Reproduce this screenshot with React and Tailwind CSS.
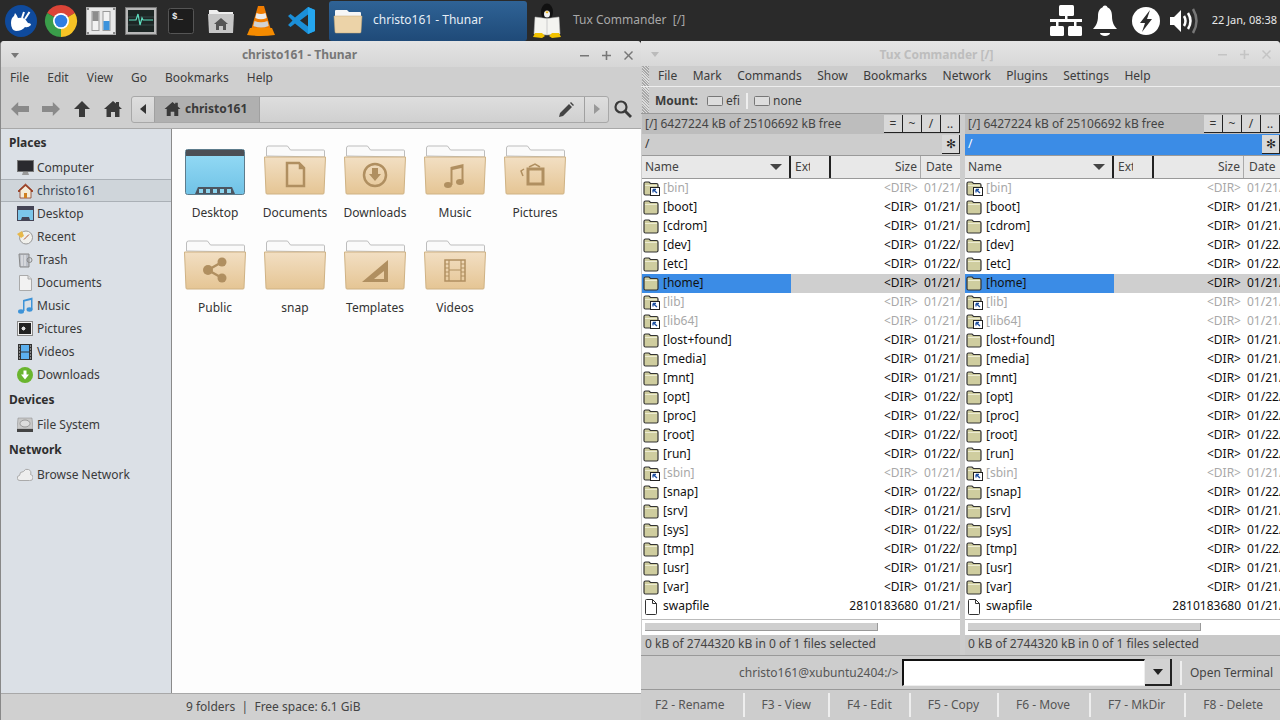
import React from 'react';

const font = { fontFamily: '"Noto Sans", sans-serif' };

const XfceIcon = () => (
  <svg width="40" height="40" viewBox="0 0 40 40">
    <circle cx="20" cy="20" r="16" fill="#0f4a9c" />
    <path d="M10 22q0-5 3-7l1-3q2 2 3 5 4-1 7 1l3 4q3 0 3 2-3 3-6 2-3 4-9 4-5-1-5-8z" fill="#fff" />
    <path d="M21 17l2-6M24 18l4.500-7" stroke="#fff" strokeWidth="2" />
  </svg>
);

const ChromeIcon = () => (
  <svg width="34" height="34" viewBox="0 0 34 34">
    <path d="M17 17L3.140 9A16 16 0 0 1 30.860 9z" fill="#db4437" />
    <path d="M17 17L30.860 9A16 16 0 0 1 17 33z" fill="#f7c325" />
    <path d="M17 17V33A16 16 0 0 1 3.140 9z" fill="#3a9d4a" />
    <circle cx="17" cy="17" r="8" fill="#fff" />
    <circle cx="17" cy="17" r="6.300" fill="#2f7de1" />
  </svg>
);

const SettingsIcon = () => (
  <svg width="30" height="28" viewBox="0 0 30 28">
    <rect x="0.500" y="0.500" width="29" height="27" fill="#e8e8e8" stroke="#b0b0b0" />
    <path d="M1 1h2v2H1zM27 1h2v2h-2zM1 25h2v2H1zM27 25h2v2h-2z" fill="#888" />
    <rect x="6" y="4.500" width="7" height="19" fill="#f2f2f2" stroke="#999" />
    <rect x="6.500" y="5" width="6" height="9" fill="#8c8c8c" />
    <rect x="17" y="4.500" width="7" height="19" fill="#f2f2f2" stroke="#999" />
    <rect x="17.500" y="14" width="6" height="9" fill="#3d93dc" />
  </svg>
);

const MonitorIcon = () => (
  <svg width="32" height="28" viewBox="0 0 32 28">
    <rect x="0.500" y="0.500" width="31" height="27" fill="#b8b8b8" stroke="#777" />
    <rect x="3" y="3" width="26" height="22" fill="#1c2624" />
    <path d="M3 10h26M3 18h26" stroke="#344" strokeWidth="1" />
    <path d="M4 13h7l2-6 2 11 2-7 1 2h10" stroke="#5fe0c0" strokeWidth="1.200" fill="none" />
  </svg>
);

const TerminalIcon = () => (
  <svg width="26" height="26" viewBox="0 0 26 26">
    <rect x="0.500" y="0.500" width="25" height="25" rx="2" fill="#1d1d1d" stroke="#555" />
    <text x="4" y="11" fontSize="9" fill="#eee" fontFamily="Liberation Mono, monospace" fontWeight="700">$_</text>
  </svg>
);

const HomeFolderIcon = () => (
  <svg width="28" height="26" viewBox="0 0 28 26">
    <path d="M2 6V2h8l2 2h14v4H2z" fill="#eee" />
    <path d="M1 6h26l-1 19H2L1 6z" fill="#c6c6c6" />
    <path d="M14 10l7 6h-2v6h-3v-4h-4v4H9v-6H7z" fill="#555" />
  </svg>
);

const VlcIcon = () => (
  <svg width="28" height="30" viewBox="0 0 28 30">
    <path d="M11 0h6l7 24H4z" fill="#f07c00" />
    <path d="M9.500 7q4.500 2 9 0l1.200 5q-5.700 2.500-11.400 0z" fill="#ececec" />
    <path d="M7.500 15q6.500 2.500 13 0l1.200 5q-7.700 3-15.400 0z" fill="#d2d2d2" />
    <path d="M3 22h22l3 7q-14 2-28 0z" fill="#f58b00" />
  </svg>
);

const VsCodeIcon = () => (
  <svg width="27" height="27" viewBox="0 0 27 27">
    <path fillRule="evenodd" d="M20 0l7 3v21l-7 3L7 16.500 2.500 20 0 18l4.500-4.500L0 9l2.500-2L7 10.500zM20 7.500l-8 6 8 6z" fill="#1b8fd8" />
    <path d="M20 0l7 3v21l-7 3z" fill="#25a6ee" />
  </svg>
);

const TuxBookIcon = () => (
  <svg width="30" height="36" viewBox="0 0 30 36">
    <ellipse cx="15" cy="9" rx="6" ry="8.500" fill="#111" />
    <ellipse cx="15" cy="11" rx="3" ry="3.500" fill="#f2f2f2" />
    <path d="M13 8.500h4l-2 2z" fill="#f0b000" />
    <path d="M3 14l12 1.500L27 14l1 17-13 1-13-1z" fill="#f4f4f0" stroke="#bbb" strokeWidth="0.500" />
    <path d="M15 16v16" stroke="#ccc" />
    <path d="M1 34l2-4h7l3 3-3 2zM29 34l-2-4h-7l-3 3 3 2z" fill="#f2c200" />
  </svg>
);

const NetworkIcon = () => (
  <svg width="32" height="31" viewBox="0 0 32 31" fill="#fff">
    <rect x="9" y="0" width="15" height="11" rx="1.500" />
    <rect x="15" y="11" width="2.500" height="4" />
    <rect x="0" y="14" width="32" height="3" />
    <rect x="6" y="17" width="2.500" height="4" />
    <rect x="24" y="17" width="2.500" height="4" />
    <rect x="0" y="21" width="14" height="10" rx="1.500" />
    <rect x="18" y="21" width="14" height="10" rx="1.500" />
  </svg>
);

const BellIcon = () => (
  <svg width="26" height="32" viewBox="0 0 26 32" fill="#fff">
    <circle cx="13" cy="3" r="2.500" />
    <path d="M13 2c5 0 7 4 7 9 0 6 2 10 5 13H1c3-3 5-7 5-13 0-5 2-9 7-9z" />
    <path d="M8 28h10a5 3 0 0 1-10 0z" />
  </svg>
);

const BoltIcon = () => (
  <svg width="28" height="28" viewBox="0 0 28 28">
    <circle cx="14" cy="14" r="14" fill="#fff" />
    <path d="M18 3L8 16h5l-3 9 10-13h-5z" fill="#2b2b2b" />
  </svg>
);

const SpeakerIcon = () => (
  <svg width="30" height="28" viewBox="0 0 30 28" fill="none">
    <path d="M0 10h4l7-7v22l-7-7H0z" fill="#fff" />
    <path d="M14 9q3 5 0 10M18 6q5 8 0 16" stroke="#fff" strokeWidth="2.500" />
    <path d="M23 2q7 12 0 24" stroke="#777" strokeWidth="2.500" />
  </svg>
);

const FolderArt = ({ children }) => (
  <svg width="62" height="50" viewBox="0 0 62 50">
    <defs>
      <linearGradient id="tan" x1="0" y1="0" x2="0" y2="1">
        <stop offset="0" stopColor="#f2dfc3" />
        <stop offset="1" stopColor="#e5c594" />
      </linearGradient>
    </defs>
    <path d="M2.500 11V3q0-2 2-2h19l3 4h33q1 0 1 1v6z" fill="#fafafa" stroke="#bdbdbd" />
    <path d="M0.500 12h61l-1.500 36q0 1-1 1H3q-1 0-1-1z" fill="url(#tan)" stroke="#cfb284" />
    {children}
  </svg>
);

const glyph = '#b08f60';

const folderGlyphs = {
  Documents: <path d="M23 18h12l5 5v18H23z M36 19v4h3" fill="none" stroke={glyph} strokeWidth="2.500" />,
  Downloads: (
    <g>
      <circle cx="31" cy="30" r="11" fill="none" stroke={glyph} strokeWidth="2.500" />
      <path d="M28 23h6v6h3l-6 7-6-7h3z" fill={glyph} />
    </g>
  ),
  Music: (
    <g fill={glyph}>
      <ellipse cx="24" cy="40" rx="4" ry="3" />
      <ellipse cx="36" cy="37" rx="4" ry="3" />
      <path d="M26.500 40V22l13-3v18h-2V23l-9 2v15z" />
    </g>
  ),
  Pictures: (
    <g fill="none" stroke={glyph}>
      <rect x="24" y="24" width="15" height="15" strokeWidth="3" />
      <path d="M25 22l6-3 5 3M20 24l-3 2 2 5" strokeWidth="1.500" />
    </g>
  ),
  Public: (
    <g fill={glyph}>
      <circle cx="24" cy="30" r="5" />
      <circle cx="38" cy="22" r="4.500" />
      <circle cx="38" cy="38" r="4.500" />
      <path d="M24 30l14-8M24 30l14 8" stroke={glyph} strokeWidth="2.500" />
    </g>
  ),
  Templates: <path fillRule="evenodd" d="M18 42L44 20v22zM30 39h10V31z" fill={glyph} />,
  Videos: (
    <g fill="none" stroke={glyph}>
      <rect x="21" y="20" width="20" height="21" strokeWidth="1.500" />
      <path d="M25 20v21M37 20v21M25 30h12M21 24h4M21 28h4M21 32h4M21 36h4M37 24h4M37 28h4M37 32h4M37 36h4" strokeWidth="1.200" />
    </g>
  ),
};

const DesktopArt = () => (
  <svg width="60" height="46" viewBox="0 0 60 46">
    <defs>
      <linearGradient id="sky" x1="0" y1="0" x2="0" y2="1">
        <stop offset="0" stopColor="#96dcf6" />
        <stop offset="1" stopColor="#70c2e6" />
      </linearGradient>
    </defs>
    <rect x="0.500" y="0.500" width="59" height="45" rx="2" fill="url(#sky)" stroke="#5e7c8c" />
    <rect x="1" y="1" width="58" height="6" fill="#4c4f55" />
    <path d="M10 45l3-7h34l3 7z" fill="#4c5560" />
    {[16, 23, 30, 37, 44].map((x) => (
      <rect key={x} x={x - 2} y="40" width="4" height="4" fill="#8cd4ee" />
    ))}
  </svg>
);

const folders = [
  'Desktop', 'Documents', 'Downloads', 'Music', 'Pictures',
  'Public', 'snap', 'Templates', 'Videos',
];

const SideIcon = ({ name }) => {
  switch (name) {
    case 'Computer':
      return (
        <svg width="17" height="16" viewBox="0 0 17 16">
          <rect x="0.500" y="0.500" width="16" height="11" fill="#2a2a2e" stroke="#777" />
          <path d="M6 12h5l1 3H5z" fill="#999" />
        </svg>
      );
    case 'christo161':
      return (
        <svg width="17" height="16" viewBox="0 0 17 16">
          <path d="M1 8l7.500-7L16 8l-1 1-1-1v7H3V8L2 9z" fill="#f4ecd8" stroke="#8c3b22" strokeWidth="0.800" />
          <path d="M8.500 1L1 8l1 1 6.500-6L15 9l1-1z" fill="#9b3d22" />
          <rect x="7" y="10" width="3" height="5" fill="#d08020" />
        </svg>
      );
    case 'Desktop':
      return (
        <svg width="17" height="15" viewBox="0 0 17 15">
          <rect x="0.500" y="0.500" width="16" height="14" fill="#7cc6ea" stroke="#445" />
          <rect x="1" y="1" width="15" height="3" fill="#445" />
          <path d="M4 14l1-3h7l1 3z" fill="#445" />
        </svg>
      );
    case 'Recent':
      return (
        <svg width="17" height="16" viewBox="0 0 17 16">
          <circle cx="9" cy="8.500" r="6.500" fill="#f0f0ec" stroke="#999" />
          <path d="M0 5l5-3 2 5-3 2z" fill="#e8b84a" />
          <path d="M9 8.500l3-3M9 8.500l-2 2" stroke="#b05030" />
        </svg>
      );
    case 'Trash':
      return (
        <svg width="15" height="16" viewBox="0 0 15 16">
          <path d="M1 2h10v13H2z" fill="#bcc0c8" stroke="#888" />
          <path d="M4 3v11M7 3v11" stroke="#eee" />
          <circle cx="11.500" cy="8" r="2.500" fill="none" stroke="#888" />
        </svg>
      );
    case 'Documents':
      return (
        <svg width="13" height="16" viewBox="0 0 13 16">
          <path d="M0.500 0.500H9l3.500 3.500v11.500H0.500z" fill="#f2f2f2" stroke="#aaa" />
          <path d="M9 0.500V4h3.500" fill="#ddd" stroke="#aaa" />
        </svg>
      );
    case 'Music':
      return (
        <svg width="15" height="17" viewBox="0 0 15 17" fill="#3d93d8">
          <ellipse cx="3" cy="14.500" rx="3" ry="2.200" />
          <ellipse cx="11.500" cy="12.500" rx="3" ry="2.200" />
          <path d="M5 14V3l9.500-2.500v12h-1.500V3L6.500 4.500V14z" />
        </svg>
      );
    case 'Pictures':
      return (
        <svg width="16" height="15" viewBox="0 0 16 15">
          <rect x="0.500" y="0.500" width="15" height="14" fill="#f0f0f0" stroke="#888" />
          <rect x="2" y="2" width="12" height="11" fill="#222" />
          <path d="M5 9l3-3M5 6l3 3M4.500 7.500h4M6.500 5.500v4" stroke="#ddd" />
        </svg>
      );
    case 'Videos':
      return (
        <svg width="14" height="16" viewBox="0 0 14 16">
          <rect width="14" height="16" fill="#333" />
          <rect x="3" y="1" width="8" height="6.500" fill="#5cb0ee" />
          <rect x="3" y="8.500" width="8" height="6.500" fill="#5cb0ee" />
          <path d="M1 2h1M1 5h1M1 8h1M1 11h1M1 14h1M12 2h1M12 5h1M12 8h1M12 11h1M12 14h1" stroke="#ddd" />
        </svg>
      );
    case 'Downloads':
      return (
        <svg width="16" height="16" viewBox="0 0 16 16">
          <circle cx="8" cy="8" r="8" fill="#6ab52e" />
          <path d="M6.500 3.500h3v4H12l-4 5-4-5h2.500z" fill="#fff" />
        </svg>
      );
    case 'File System':
      return (
        <svg width="16" height="16" viewBox="0 0 16 16">
          <path d="M1 1h14l1 11H0z" fill="#c8c8c8" stroke="#888" strokeWidth="0.500" />
          <rect y="12" width="16" height="3" fill="#444" />
          <ellipse cx="8" cy="6.500" rx="5" ry="3.500" fill="#ddd" stroke="#999" />
        </svg>
      );
    default:
      return (
        <svg width="16" height="13" viewBox="0 0 16 13">
          <path d="M3 12.500a2.500 2.500 0 0 1-.5-5 4 4 0 0 1 4-4 4 4 0 0 1 5 -2 3.500 3.500 0 0 1 2 5 3 3 0 0 1-1 6z" fill="#eee" stroke="#aaa" />
        </svg>
      );
  }
};

const SideRow = ({ name, active }) => (
  <div className={`flex h-[23px] items-center ${active ? 'border-y border-[#aab0b6] bg-[#cfd5da] text-[#3b4a5a]' : 'text-[#3a3a3a]'}`}>
    <div className="flex w-[36px] shrink-0 justify-center pl-[12px]">
      <SideIcon name={name} />
    </div>
    <span>{name}</span>
  </div>
);

const SideHead = ({ children }) => (
  <div className="flex h-[25px] items-center pb-[2px] pl-[8px] font-bold text-[#2e2e2e]">{children}</div>
);

const Thunar = () => (
  <div className="flex h-full w-[641px] shrink-0 flex-col overflow-hidden rounded-t-[4px] border-l border-[#888] bg-[#cfcfcf] text-[12px] text-[#3c3c3c]">
    <div className="flex h-[26px] shrink-0 items-center justify-between bg-gradient-to-b from-[#e4e4e4] to-[#d6d6d6] pl-[10px] pr-[8px] pt-[2px]">
      <div className="h-0 w-0 border-x-[4px] border-t-[5px] border-x-transparent border-t-[#777]" />
      <span className="font-bold text-[#777]">christo161 - Thunar</span>
      <div className="flex gap-[13px] text-[#777]">
        <svg width="9" height="9" viewBox="0 0 9 9"><path d="M0 4h9v1.500H0z" fill="#777" /></svg>
        <svg width="9" height="9" viewBox="0 0 9 9"><path d="M3.700 0h1.600v3.700H9v1.600H5.300V9H3.700V5.300H0V3.700h3.700z" fill="#777" /></svg>
        <svg width="9" height="9" viewBox="0 0 9 9"><path d="M1 0l3.500 3.500L8 0l1 1-3.500 3.500L9 8l-1 1-3.500-3.500L1 9 0 8l3.500-3.500L0 1z" fill="#777" /></svg>
      </div>
    </div>
    <div className="flex h-[23px] shrink-0 items-center gap-[18px] pb-[2px] pl-[9px]">
      {['File', 'Edit', 'View', 'Go', 'Bookmarks', 'Help'].map((m) => (
        <span key={m}>{m}</span>
      ))}
    </div>
    <div className="flex h-[38px] shrink-0 items-center pl-[10px]">
      <div className="flex w-[120px] items-center">
        <svg className="mr-[13px]" width="18" height="16" viewBox="0 0 20 16" preserveAspectRatio="none"><path d="M0 8l8-7v4h12v6H8v4z" fill="#8a8a8a" /></svg>
        <svg className="mr-[13px]" width="18" height="16" viewBox="0 0 20 16" preserveAspectRatio="none"><path d="M20 8l-8-7v4H0v6h12v4z" fill="#8a8a8a" /></svg>
        <svg className="mr-[13px]" width="18" height="18" viewBox="0 0 18 18"><path d="M9 1l8 8h-5v8H6V9H1z" fill="#3a3a3a" /></svg>
        <svg width="18" height="18" viewBox="0 0 18 18"><path d="M9 1l3 2.600V2h3v4.200L18 9h-2.500v8H11v-5H7v5H2.500V9H0z" fill="#3a3a3a" /></svg>
      </div>
      <div className="flex h-[27px] w-[478px] overflow-hidden rounded-[3px] border border-[#a8a8a8] bg-gradient-to-b from-[#dedede] to-[#d0d0d0]">
        <div className="flex w-[23px] items-center justify-center border-r border-[#a0a0a0]">
          <div className="h-0 w-0 border-y-[5px] border-r-[6px] border-y-transparent border-r-[#333]" />
        </div>
        <div className="flex w-[105px] items-center gap-[4px] border-r border-[#a0a0a0] bg-[#b0b0b0] pl-[9px] font-bold text-[#3a3a3a]">
          <svg width="17" height="16" viewBox="0 0 18 18"><path d="M9 1l3 2.600V2h3v4.200L18 9h-2.500v8H11v-5H7v5H2.500V9H0z" fill="#3a3a3a" /></svg>
          christo161
        </div>
        <div className="flex flex-1 items-center justify-end pr-[10px]">
          <svg width="15" height="15" viewBox="0 0 15 15"><path d="M0 15l1-4L10 2l3 3-9 9zM11 1l1-1 3 3-1 1z" fill="#444" /></svg>
        </div>
        <div className="flex w-[24px] items-center justify-center border-l border-[#a0a0a0]">
          <div className="h-0 w-0 border-y-[5px] border-l-[6px] border-y-transparent border-l-[#999]" />
        </div>
      </div>
      <svg className="ml-[5px]" width="18" height="18" viewBox="0 0 18 18" fill="none"><circle cx="7" cy="7" r="5.500" stroke="#3a3a3a" strokeWidth="2.200" /><path d="M11 11l6 6" stroke="#3a3a3a" strokeWidth="2.800" /></svg>
    </div>
    <div className="flex min-h-0 flex-1 border-y border-[#a8a8a8]">
      <div className="w-[171px] shrink-0 border-r border-[#8a8a8a] bg-[#dbe0e6] pt-[2px]">
        <SideHead>Places</SideHead>
        {['Computer', 'christo161', 'Desktop', 'Recent', 'Trash', 'Documents', 'Music', 'Pictures', 'Videos', 'Downloads'].map((n) => (
          <SideRow key={n} name={n} active={n === 'christo161'} />
        ))}
        <div className="h-[2px]" />
        <SideHead>Devices</SideHead>
        <SideRow name="File System" />
        <div className="h-[2px]" />
        <SideHead>Network</SideHead>
        <SideRow name="Browse Network" />
      </div>
      <div className="flex-1 bg-[#fdfdfd] pl-[3px] pt-[16px]">
        <div className="grid grid-cols-[repeat(5,80px)] auto-rows-[95px]">
          {folders.map((f) => (
            <div key={f} className="flex flex-col items-center">
              <div className="flex h-[50px] items-end">
                {f === 'Desktop' ? <DesktopArt /> : <FolderArt>{folderGlyphs[f]}</FolderArt>}
              </div>
              <span className="mt-[9px] text-[#333]">{f}</span>
            </div>
          ))}
        </div>
      </div>
    </div>
    <div className="flex h-[26px] shrink-0 items-center bg-[#d0d0d0] pl-[185px] text-[#444]">
      9 folders&nbsp;&nbsp;|&nbsp;&nbsp;Free space: 6.1 GiB
    </div>
  </div>
);

const rows = [
  ['[bin]', '01/21/', 'link'], ['[boot]', '01/21/'], ['[cdrom]', '01/21/'], ['[dev]', '01/22/'],
  ['[etc]', '01/22/'], ['[home]', '01/21/', 'sel'], ['[lib]', '01/21/', 'link'], ['[lib64]', '01/21/', 'link'],
  ['[lost+found]', '01/21/'], ['[media]', '01/21/'], ['[mnt]', '01/21/'], ['[opt]', '01/22/'],
  ['[proc]', '01/22/'], ['[root]', '01/22/'], ['[run]', '01/22/'], ['[sbin]', '01/21/', 'link'],
  ['[snap]', '01/22/'], ['[srv]', '01/21/'], ['[sys]', '01/22/'], ['[tmp]', '01/22/'],
  ['[usr]', '01/21/'], ['[var]', '01/21/'],
];

const MiniFolder = ({ link }) => (
  <svg width="17" height="15" viewBox="0 0 17 15">
    <path d="M1 12.500V2.500q0-1.500 1.500-1.500h3.500l1.500 1.500H13.500q1.500 0 1.500 1.500v8.500q0 1.500-1.500 1.500h-11q-1.500 0-1.500-1.500z" fill="#cfcd9f" stroke="#333" strokeWidth="1.200" />
    <path d="M2 4.500h12" stroke="#ecebd2" />
    {link && (
      <g>
        <rect x="7.500" y="6.500" width="9" height="8" fill="#fff" stroke="#222" />
        <path d="M14 12L10 8.500M10 8.500h3M10 8.500v3" stroke="#1c4fa0" strokeWidth="1.300" fill="none" />
      </g>
    )}
  </svg>
);

const MiniFile = () => (
  <svg width="17" height="16" viewBox="0 0 17 16">
    <path d="M3.500 0.500h6l4 4v10q0 1-1 1h-9q-1 0-1-1v-13q0-1 1-1z" fill="#fff" stroke="#333" />
    <path d="M9.500 0.500v4h4" fill="none" stroke="#333" />
  </svg>
);

const PanelButton = ({ children }) => (
  <div className="flex h-[18px] w-[19px] items-center justify-center border-r border-b border-[#222] bg-[#d8d8d8] text-[#333]">{children}</div>
);

const FileRow = ({ name, date, kind, size, file, dateClass }) => {
  const link = kind === 'link';
  const sel = kind === 'sel';
  return (
    <div className={`flex h-[19px] items-center ${link ? 'text-[#a8a8a8]' : 'text-[#111]'} ${sel ? 'bg-[#cfcfcf]' : ''}`}>
      <div className={`flex h-full w-[149px] shrink-0 items-center pl-[1px] ${sel ? 'bg-[#3b8ce6]' : ''}`}>
        <span className="flex w-[20px] shrink-0 items-center">
          {file ? <MiniFile /> : <MiniFolder link={link} />}
        </span>
        <span className="mb-[2px]">{name}</span>
      </div>
      <div className="mb-[2px] w-[127px] shrink-0 text-right">{size}</div>
      <div className={`mb-[2px] shrink-0 overflow-hidden whitespace-nowrap pl-[6px] ${dateClass}`}>{date}</div>
    </div>
  );
};

const Panel = ({ active, width, dateClass }) => (
  <div className={`flex h-full shrink-0 flex-col overflow-hidden ${width}`}>
    <div className="flex h-[20px] shrink-0 items-center justify-between bg-[#bdbdbd]">
      <span className="pl-[3px] text-[#444]">[/] 6427224 kB of 25106692 kB free</span>
      <div className="flex">
        <PanelButton>=</PanelButton>
        <PanelButton>~</PanelButton>
        <PanelButton>/</PanelButton>
        <PanelButton>..</PanelButton>
      </div>
    </div>
    <div className={`flex h-[21px] shrink-0 items-center justify-between pl-[3px] ${active ? 'bg-[#3b8ce6] text-white' : 'bg-[#cdcdcd] text-[#333]'}`}>
      <span className="mb-[2px]">/</span>
      <div className="flex h-[19px] w-[18px] items-center justify-center border-r border-b border-[#222] bg-[#d8d8d8] text-[#222]">✻</div>
    </div>
    <div className="flex h-[24px] shrink-0 items-center border-y border-[#999] bg-[#e8e8e8] text-[#444]">
      <div className="flex h-full w-[149px] shrink-0 items-center justify-between border-r-2 border-[#222] pl-[3px] pr-[7px]">
        <span>Name</span>
        <div className="h-0 w-0 border-x-[6px] border-t-[6px] border-x-transparent border-t-[#444]" />
      </div>
      <div className="flex h-full w-[40px] shrink-0 items-center border-r-2 border-[#222] pl-[4px]">
        <span className="w-[15px] overflow-hidden">Ext</span>
      </div>
      <div className="flex h-full w-[90px] shrink-0 items-center justify-end border-r border-[#aaa] pr-[3px]">Size</div>
      <div className="pl-[5px]">Date</div>
    </div>
    <div className="flex min-h-0 flex-1 flex-col overflow-hidden bg-white">
      <div className="flex-1">
        {rows.map(([name, date, kind]) => (
          <FileRow key={name} name={name} date={date} kind={kind} size="<DIR>" dateClass={dateClass} />
        ))}
        <FileRow name="swapfile" date="01/21/" size="2810183680" file dateClass={dateClass} />
      </div>
      <div className="h-[16px] shrink-0 border-t border-[#bbb] pl-[3px] pt-[3px]">
        <div className="h-[8px] w-[233px] border-r border-b border-[#999] bg-[#cfcfcf]" />
      </div>
    </div>
    <div className="flex h-[20px] shrink-0 items-center bg-[#c9c9c9] pb-[3px] pl-[3px] text-[#444]">0 kB of 2744320 kB in 0 of 1 files selected</div>
  </div>
);

const fkeys = [
  ['F2 - Rename', 'pr-[18px]'],
  ['F3 - View', 'pl-[17px] pr-[17px]'],
  ['F4 - Edit', 'pl-[17px] pr-[17px]'],
  ['F5 - Copy', 'pl-[17px] pr-[18px]'],
  ['F6 - Move', 'pl-[17px] pr-[19px]'],
  ['F7 - MkDir', 'pl-[17px] pr-[19px]'],
  ['F8 - Delete', 'pl-[17px]'],
];

const Grip = () => (
  <div className="h-full w-[7px] shrink-0 bg-[repeating-linear-gradient(45deg,#a8a8a8,#a8a8a8_1px,#dcdcdc_1px,#dcdcdc_2px)]" />
);

const TuxCommander = () => (
  <div className="flex h-full min-w-0 flex-1 flex-col overflow-hidden rounded-tr-[4px] bg-[#cdcdcd] text-[12px] text-[#3c3c3c]">
    <div className="flex h-[25px] shrink-0 items-center justify-between bg-gradient-to-b from-[#e4e4e4] to-[#d8d8d8] pl-[10px] pr-[9px] pt-[2px]">
      <div className="h-0 w-0 border-x-[4px] border-t-[5px] border-x-transparent border-t-[#bbb]" />
      <span className="pr-[4px] font-bold text-[#bdbdbd]">Tux Commander [/]</span>
      <div className="flex gap-[13px]">
        <svg width="9" height="9" viewBox="0 0 9 9"><path d="M0 4h9v1.500H0z" fill="#c4c4c4" /></svg>
        <svg width="9" height="9" viewBox="0 0 9 9"><path d="M3.700 0h1.600v3.700H9v1.600H5.300V9H3.700V5.300H0V3.700h3.700z" fill="#c4c4c4" /></svg>
        <svg width="9" height="9" viewBox="0 0 9 9"><path d="M1 0l3.500 3.500L8 0l1 1-3.500 3.500L9 8l-1 1-3.500-3.500L1 9 0 8l3.500-3.500L0 1z" fill="#c4c4c4" /></svg>
      </div>
    </div>
    <div className="flex h-[21px] shrink-0 items-center border-b border-[#eee] pl-[1px]">
      <Grip />
      <div className="ml-[9px] flex gap-[15.500px]">
        {['File', 'Mark', 'Commands', 'Show', 'Bookmarks', 'Network', 'Plugins', 'Settings', 'Help'].map((m) => (
          <span key={m}>{m}</span>
        ))}
      </div>
    </div>
    <div className="flex h-[27px] shrink-0 items-center border-b border-[#999] pl-[1px]">
      <Grip />
      <div className="flex items-center pl-[6px] pt-[1px]">
        <span className="font-bold">Mount:</span>
        <svg className="ml-[9px]" width="17" height="10" viewBox="0 0 17 10"><rect x="0.500" y="0.500" width="15" height="9" rx="1" fill="#ddd" stroke="#777" /></svg>
        <span className="ml-[2px]">efi</span>
        <div className="mx-[6px] h-[16px] w-[2px] bg-[#eee]" />
        <svg width="17" height="10" viewBox="0 0 17 10"><rect x="0.500" y="0.500" width="15" height="9" rx="1" fill="#ddd" stroke="#777" /></svg>
        <span className="ml-[2px]">none</span>
      </div>
    </div>
    <div className="flex min-h-0 flex-1 gap-[5px] pl-[1px]">
      <Panel width="w-[318px]" dateClass="w-[42px]" />
      <Panel active width="w-[315px]" dateClass="w-[39px]" />
    </div>
    <div className="flex h-[35px] shrink-0 items-center border-y border-[#999] bg-[#cdcdcd]">
      <span className="ml-[98px] w-[158px] whitespace-nowrap text-right text-[#555]">christo161@xubuntu2404:/&gt;</span>
      <div className="ml-[5px] h-[27px] w-[243px] border-b border-l-2 border-r border-t-2 border-b-[#eee] border-l-[#111] border-r-[#eee] border-t-[#111] bg-white" />
      <div className="flex h-[27px] w-[27px] items-center justify-center border-b-2 border-r-2 border-[#222] bg-[#d2d2d2]">
        <div className="h-0 w-0 border-x-[5px] border-t-[6px] border-x-transparent border-t-[#222]" />
      </div>
      <div className="ml-[8px] h-[24px] w-[2px] bg-[#eee]" />
      <span className="ml-[8px] whitespace-nowrap text-[#444]">Open Terminal</span>
    </div>
    <div className="flex h-[30px] shrink-0 items-center pl-[14px] text-[#555]">
      {fkeys.map(([label, pad], i) => (
        <div key={label} className={`flex h-[24px] items-center whitespace-nowrap ${pad} ${i < 6 ? 'border-r-2 border-[#eee]' : ''}`}>
          {label}
        </div>
      ))}
    </div>
  </div>
);

const TopBar = () => (
  <div className="flex h-[41px] shrink-0 items-center bg-[#2a2a2a] text-[12px]">
    <div className="flex h-full">
      {[<XfceIcon />, <ChromeIcon />, <SettingsIcon />, <MonitorIcon />, <TerminalIcon />, <HomeFolderIcon />, <VlcIcon />, <VsCodeIcon />].map((icon, i) => (
        <div key={i} className={`flex h-full items-center justify-center ${i === 0 ? 'w-[41px]' : 'w-[40px]'}`}>{icon}</div>
      ))}
    </div>
    <div className="ml-[8px] flex h-[40px] w-[198px] items-center rounded-[3px] bg-gradient-to-b from-[#2f6396] to-[#1f4a78] pl-[4px] text-[#e6eef6]">
      <svg width="30" height="26" viewBox="0 0 30 26">
        <path d="M2 8V3q0-1 1-1h11l2 2h11q1 0 1 1v3z" fill="#f6f6f6" />
        <path d="M1 8h28l-1 16q0 1-1 1H3q-1 0-1-1z" fill="#ecd3a8" stroke="#c8aa78" strokeWidth="0.500" />
      </svg>
      <span className="mb-[2px] ml-[10px]">christo161 - Thunar</span>
    </div>
    <div className="ml-[5px] flex items-center text-[#a8a8a8]">
      <TuxBookIcon />
      <span className="mb-[2px] ml-[11px] whitespace-pre">Tux Commander  [/]</span>
    </div>
    <div className="ml-auto flex items-center pr-[3px]">
      <NetworkIcon />
      <div className="ml-[10px]"><BellIcon /></div>
      <div className="ml-[14px]"><BoltIcon /></div>
      <div className="ml-[10px]"><SpeakerIcon /></div>
      <span className="ml-[12px] text-[11px] text-[#e8e8e8]">22 Jan, 08:38</span>
    </div>
  </div>
);

export default function App() {
  return (
    <div className="flex h-[720px] w-[1280px] flex-col overflow-hidden bg-[#2a2a2a]" style={font}>
      <TopBar />
      <div className="flex min-h-0 flex-1">
        <Thunar />
        <TuxCommander />
      </div>
    </div>
  );
}
